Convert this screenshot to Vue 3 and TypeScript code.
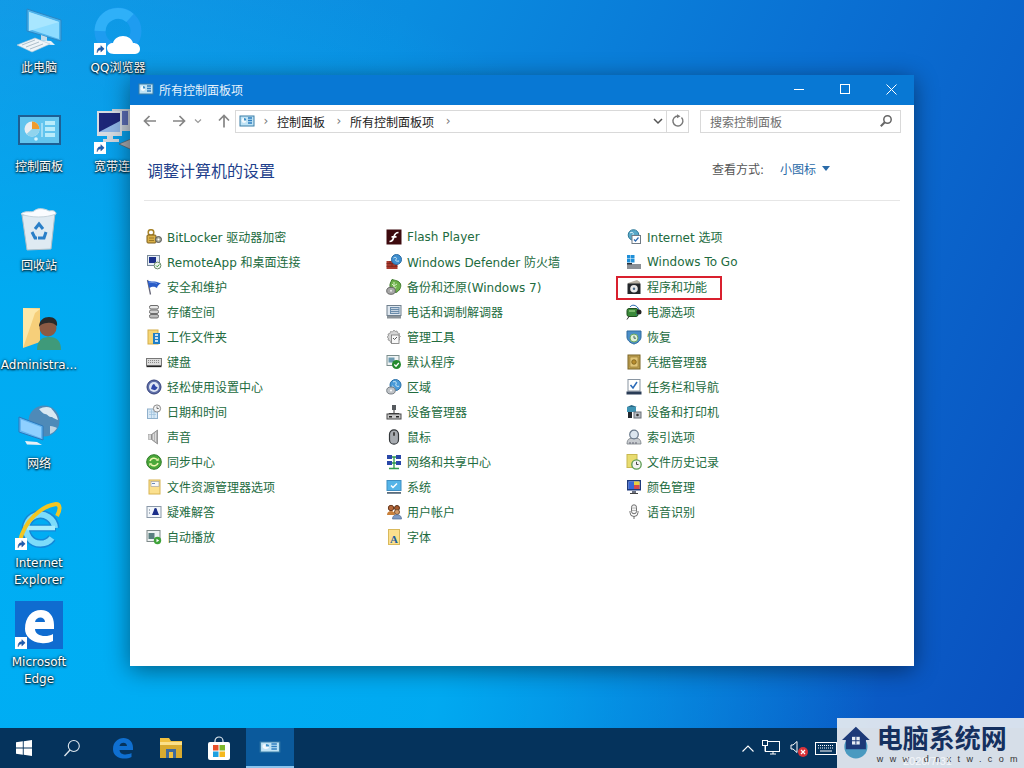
<script setup lang="ts">
interface CpItem {
  label: string
  icon: string
  marked?: boolean
}

const cpIcon = `<rect x="1" y="3" width="14" height="10" fill="#bfe3f5" stroke="#3a7fa8"/><circle cx="5" cy="7.500" r="2.400" fill="#f4fafd"/><path d="M5 7.500V5.100a2.400 2.400 0 0 1 2.400 2.400z" fill="#3a8fc8"/><path d="M9 5h4M9 7.500h4M9 10h4" stroke="#2f7fc0" stroke-width="1.300"/>`

const smallIcons: Record<string, string> = {
  bitlocker: `<circle cx="5" cy="3.500" r="2.800" fill="none" stroke="#a8842a" stroke-width="1.500"/><rect x="1" y="6" width="9" height="8" rx="1" fill="#d9b048" stroke="#7d5f1c"/><path d="M3 9h5M3 11.500h5" stroke="#8a6a1e" stroke-width=".8"/><circle cx="12.500" cy="10.500" r="3" fill="#a6a898" stroke="#555"/><circle cx="12.500" cy="10.500" r="1" fill="#fff"/>`,
  remote: `<rect x="1.500" y="1.500" width="12" height="10" fill="#e6eef5" stroke="#7a8a9a"/><rect x="3" y="3" width="7" height="6" fill="#1b2f8a"/><circle cx="11.500" cy="11.500" r="3.400" fill="#eef3ee" stroke="#6a8a6a"/><path d="M10 11.500l1.300 1.300 2-2.400" stroke="#3a9a3a" fill="none"/>`,
  flag: `<path d="M1.500 1l3 14.500" stroke="#667" stroke-width="1.300"/><path d="M1.500 1.500c4 2 6-.5 13.500 3-2.500 1-3.500 2.500-4 4.500C8 7 6 7.500 3.300 9z" fill="#2a5cc8"/><path d="M3 3c3 1 5 0 8 1.500" stroke="#6f95e0" fill="none"/>`,
  storage: `<rect x="3.500" y="1.500" width="9" height="3.500" rx="1.500" fill="#e8e8e8" stroke="#6e6e6e"/><rect x="3.500" y="6" width="9" height="3.500" rx="1.500" fill="#d4d4d4" stroke="#6e6e6e"/><rect x="3.500" y="10.500" width="9" height="3.500" rx="1.500" fill="#bdbdbd" stroke="#6e6e6e"/>`,
  workfolder: `<rect x="2" y="1" width="10" height="14" fill="#f6d676" stroke="#d4ad4a"/><rect x="7" y="4" width="7" height="11" fill="#1f7fc8"/><path d="M9 6h3M9 9h3M9 12h3" stroke="#fff" stroke-width="1.300"/>`,
  keyboard: `<rect x="0.500" y="4.500" width="15" height="7" fill="#dcdcdc" stroke="#777"/><path d="M2 6.500h12M2 8.500h12" stroke="#8a8a8a" stroke-dasharray="1 1"/><path d="M0.500 12.500h15" stroke="#222" stroke-width="1.300"/>`,
  ease: `<circle cx="8" cy="8" r="7" fill="#5f6fa8" stroke="#34407a"/><circle cx="8" cy="8" r="5" fill="#dfe6f5"/><path d="M5 10c1-4 2-5 3-5s1 3 3 3-2 4-3 3" fill="#2f46a8"/>`,
  datetime: `<rect x="1.500" y="5" width="10" height="9.500" fill="#d8e8f5" stroke="#8fb0cc"/><path d="M3 8h7M3 10.500h7M5.500 6v8M8 6v8" stroke="#9cc0dc" stroke-width=".7"/><circle cx="11" cy="4.500" r="3.600" fill="#f4f4f4" stroke="#8a8a8a"/><path d="M11 2.500v2h1.800" stroke="#555" fill="none" stroke-width=".8"/>`,
  sound: `<rect x="2.500" y="5.500" width="3" height="5" fill="#d4d4d4" stroke="#a0a0a0" stroke-width=".6"/><path d="M5.500 5.500l6-4.500v14l-6-4.500z" fill="#b4b4b4" stroke="#7d7d7d" stroke-width=".7"/><path d="M7.500 5v6M9.500 3.500v9" stroke="#e6e6e6" stroke-width=".8"/>`,
  sync: `<circle cx="8" cy="8" r="7.300" fill="#4aa83a" stroke="#2e7a26"/><path d="M4 7a4.200 4.200 0 0 1 7-1.500M12 9a4.200 4.200 0 0 1-7 1.500" stroke="#f0f7b0" stroke-width="1.600" fill="none"/><path d="M9.800 6.800h2.900V3.900zM6.200 9.200H3.300v2.900z" fill="#f0f7b0"/>`,
  folderopts: `<rect x="3" y="1" width="11" height="14" fill="#fbe08e" stroke="#d8b452"/><rect x="5" y="2.500" width="8" height="5" fill="#f8f8f8" stroke="#9a9a9a" stroke-width=".6"/><path d="M6 4.500h3" stroke="#6a8ab8"/>`,
  trouble: `<rect x="1" y="2.500" width="14" height="11" fill="#f2f6fa" stroke="#8a98a8"/><path d="M6 11l2-5h3l2 5z" fill="#1b2f8a"/><circle cx="9.500" cy="5.500" r="1.500" fill="#1b2f8a"/><path d="M3 6h2M3 9h2" stroke="#6a7a8a" stroke-dasharray="1 1"/>`,
  autoplay: `<rect x="1" y="1.500" width="13" height="11" fill="#eef2f2" stroke="#7e8a8a"/><rect x="2.500" y="4" width="6" height="6" fill="#5a7f80"/><circle cx="11.500" cy="11.500" r="3.700" fill="#3fa33a"/><path d="M10.500 9.800l2.700 1.700-2.700 1.700z" fill="#fff"/>`,
  flash: `<rect x="0.500" y="0.500" width="15" height="15" fill="#3d0a0e"/><path d="M3.500 12.500c3.500 0 3.800-2.600 4.500-5s1.500-4 4.500-4M5.500 7.800h5" stroke="#fff" stroke-width="1.700" fill="none"/>`,
  firewall: `<path d="M0.500 7h11v8h-11z" fill="#a83a2e"/><path d="M0.500 9.600h11M0.500 12.300h11M4 7v2.600M8 7v2.600M6 9.600v2.700M10 9.600v2.700" stroke="#6e2018" stroke-width=".7"/><circle cx="10.500" cy="5.500" r="5" fill="#3f8fd0" stroke="#2a6aa0"/><path d="M7.500 4c2-1.500 4 0 2.500 1.500s1.500 2 3 1.500" stroke="#cfeaf8" fill="none"/>`,
  backup: `<path d="M6 0.500c3 1 7 1 8.500 4.500 1 3-1 7-4.500 8.500-3-1-5.500-3-6-6C3.500 5 5 3 6 .5z" fill="#6db04a" stroke="#3f7a2c"/><path d="M8 3v8M6 5l2 2 3-2M6.500 9L8 10l2.500-2" stroke="#d7efc4" fill="none"/><ellipse cx="5" cy="11.800" rx="4.300" ry="3.500" fill="#a8a8a8" stroke="#666"/><circle cx="5" cy="11.800" r="1" fill="#eee"/>`,
  phone: `<rect x="1" y="1.500" width="14" height="10" fill="#dfe7ef" stroke="#70808e"/><rect x="4" y="3" width="9.500" height="7" fill="#6a8cab"/><path d="M5 4.500h7.500M5 6.500h7.500M5 8.500h7.500" stroke="#dfe7ef" stroke-width=".8"/><rect x="1" y="12" width="14" height="2.500" fill="#8a9298"/>`,
  admin: `<path d="M8 1l1 1.500 2-.5.500 2 2 .5-.500 2 1.500 1-1.500 1.500.500 2-2 .5-.500 2-2-.5L8 14.500 6.500 13l-2 .5-.5-2-2-.5.500-2L1 8l1.500-1L2 5l2-.5.500-2 2 .5z" fill="#d6d6d6" stroke="#8e8e8e" stroke-width=".8"/><rect x="5.500" y="6" width="7.500" height="8.500" fill="#f7f7f7" stroke="#777" stroke-width=".8"/><path d="M7 9l1.500 1.500L11 8" stroke="#555" fill="none"/>`,
  defaults: `<rect x="1" y="1.500" width="12" height="10" fill="#f0f4f4" stroke="#7b8d8d"/><rect x="2.500" y="3.500" width="6" height="5" fill="#6d9ab0"/><circle cx="10.500" cy="10.500" r="4.500" fill="#248a2e"/><path d="M8.300 10.500l1.700 1.700 2.800-3.200" stroke="#fff" stroke-width="1.300" fill="none"/>`,
  region: `<circle cx="9.500" cy="6" r="5.500" fill="#4a9ad8" stroke="#2a70a8"/><path d="M7 3c2-1 4 0 3 2s2 3 3 2M6 7c1 0 2 1 2 3" stroke="#d8f0fb" fill="none"/><ellipse cx="5" cy="11.500" rx="4.300" ry="3.500" fill="#c0c4c8" stroke="#7a8086"/><circle cx="5" cy="11.500" r="1" fill="#fff"/>`,
  devmgr: `<rect x="6" y="1" width="4" height="5" fill="#55595e"/><path d="M8 6v3M3 13V9.500h10V13" stroke="#333" fill="none"/><rect x="1" y="10" width="14" height="5" fill="#c8c8c8" stroke="#4a4a4a"/><rect x="3" y="12" width="3" height="1.500" fill="#222"/><rect x="10" y="12" width="3" height="1.500" fill="#222"/>`,
  mouse: `<rect x="3.500" y="0.800" width="9" height="14.400" rx="4.500" fill="#a7abb0" stroke="#33373a" stroke-width="1.200"/><rect x="7" y="3" width="2" height="4" rx="1" fill="#444"/>`,
  network: `<rect x="1" y="1" width="5" height="4" fill="#2a48a8"/><rect x="10" y="1" width="5" height="4" fill="#2a48a8"/><rect x="1" y="7" width="5" height="4" fill="#2a48a8"/><rect x="10" y="7" width="5" height="4" fill="#2a48a8"/><path d="M6 3h4M6 9h4M8 3v11M3 14.500h10" stroke="#2f9a4a" stroke-width="1.300"/>`,
  system: `<rect x="1" y="1.500" width="14" height="10" fill="#55b4e8" stroke="#3f8fc4"/><path d="M5 6.500l2 2 4-4" stroke="#fff" stroke-width="1.500" fill="none"/><rect x="1" y="13" width="14" height="1.800" fill="#5a6c7c"/>`,
  users: `<circle cx="5" cy="4" r="2.700" fill="#b4673a" stroke="#6a3a1e"/><path d="M1 11c0-3 2-4 4-4s4 1 4 4z" fill="#c9803a"/><circle cx="11" cy="4" r="2.500" fill="#a85a2e" stroke="#5a3018"/><circle cx="11" cy="8" r="2.500" fill="#d09a6a" stroke="#7a5230"/><path d="M6.500 15c0-3 2-4.300 4.500-4.300s4.500 1.300 4.500 4.300z" fill="#7d9ac4" stroke="#4f6a94" stroke-width=".7"/>`,
  font: `<rect x="2.500" y="0.500" width="11" height="15" fill="#fbe08e" stroke="#d9b95c"/><text x="8" y="14" text-anchor="middle" font-family="Liberation Serif" font-size="11" font-weight="700" fill="#1d5fa0">A</text>`,
  internet: `<circle cx="7.500" cy="6" r="5.300" fill="#58a8c8" stroke="#2e7a98"/><path d="M4 4c2-1.500 4 0 3 1.500s1 2 3 1.500" stroke="#dff3f8" fill="none"/><rect x="6" y="6.500" width="8.500" height="8" fill="#fff" stroke="#707a84"/><path d="M8 10.500l1.500 1.500 3-3.500" stroke="#2c6ab0" fill="none" stroke-width="1.200"/>`,
  wtg: `<rect x="1" y="1" width="3.500" height="3.500" fill="#1f8fd8"/><rect x="5" y="1" width="3.500" height="3.500" fill="#1f8fd8"/><rect x="1" y="5" width="3.500" height="3.500" fill="#1f8fd8"/><rect x="5" y="5" width="3.500" height="3.500" fill="#1f8fd8"/><rect x="1" y="10" width="14" height="5" fill="#8c9096"/><rect x="1" y="9" width="5" height="1.500" fill="#2a2f36"/>`,
  programs: `<path d="M2 4l9-3 3 2v2H2z" fill="#b7b0a4"/><rect x="1.500" y="4.500" width="13" height="10.500" fill="#23272b"/><circle cx="8" cy="9.700" r="3.800" fill="#e8e8e8"/><circle cx="8" cy="9.700" r="1.200" fill="#4a6a8a"/>`,
  power: `<rect x="1" y="4.500" width="11" height="8" rx="2" fill="#3a8a3a" stroke="#1f4f1f"/><path d="M3 7h6" stroke="#b8e8a0"/><path d="M4 3c2-3 6-2 8 1s0 6-2 7" stroke="#2a6ab0" fill="none"/><circle cx="13" cy="8" r="2.500" fill="#222"/><path d="M3 12.500l-2 3" stroke="#333"/>`,
  recovery: `<path d="M1 2h14v6c0 3-3 6-7 7-4-1-7-4-7-7z" fill="#4a8ec8" stroke="#2e6a9e"/><circle cx="8" cy="9" r="4" fill="#dff0d8" stroke="#6aa860"/><path d="M8 6.800v2.400h2" stroke="#466" fill="none"/>`,
  credential: `<rect x="2" y="1" width="12" height="14" fill="#c0a252" stroke="#7b6426"/><rect x="4" y="3" width="8" height="10" fill="#e2c678" stroke="#8f7530" stroke-width=".6"/><circle cx="8" cy="8" r="2.300" fill="#b88d2e" stroke="#6e5516" stroke-width=".7"/>`,
  taskbar: `<rect x="2" y="0.500" width="12" height="11.500" fill="#fff" stroke="#8a96a2"/><path d="M4.500 6l2.500 3 4-6" stroke="#2a6ab8" stroke-width="1.500" fill="none"/><rect x="0.500" y="12.500" width="15" height="3" fill="#2a3c56"/>`,
  devices: `<rect x="1" y="3" width="9" height="5" fill="#3e94b4"/><path d="M1 3l4.500-2L11 3z" fill="#2a6a88"/><rect x="2" y="8" width="4" height="6" fill="#22282e"/><rect x="8" y="8" width="7" height="6" fill="#b8bdc4" stroke="#6a7078"/><circle cx="11.500" cy="11" r="1.300" fill="#333"/>`,
  index: `<path d="M1 15c0-3 1-5 3-5.500h8c2 .5 3 2.500 3 5.500z" fill="#c8ccd0" stroke="#7a8086" stroke-width=".8"/><circle cx="8" cy="5.500" r="4.300" fill="#dce6ef" stroke="#6a7a8c" stroke-width="1.200"/><path d="M4 15v-2M7 15v-2M10 15v-2" stroke="#667"/>`,
  filehistory: `<rect x="1" y="0.500" width="10" height="13" fill="#e8dc70" stroke="#c8b850"/><circle cx="10.500" cy="10.500" r="4.700" fill="#f2f2f2" stroke="#5a9a50" stroke-width="1.300"/><path d="M10.500 7.800v2.700h2" stroke="#444" fill="none"/>`,
  color: `<rect x="1" y="1" width="14" height="10.500" fill="#1f3a7c"/><rect x="2.500" y="2.500" width="11" height="7.500" fill="#e8e8f8"/><path d="M2.500 2.500h5.500V10H2.500z" fill="#3a68d8"/><path d="M8 2.500h5.500V6H8z" fill="#e8d040"/><path d="M8 6h5.500v4H8z" fill="#d84a4a"/><path d="M6 12h4v2H6z" fill="#6a7080"/><path d="M4 14.500h8" stroke="#444"/>`,
  speech: `<rect x="5.500" y="0.800" width="5" height="9" rx="2.500" fill="#f5f5f5" stroke="#6e6e6e"/><path d="M5.500 4h5M5.500 6.500h5" stroke="#9a9a9a" stroke-width=".7"/><path d="M4 7v1.500a4 4 0 0 0 8 0V7M8 12.500v2.500" stroke="#6e6e6e" fill="none"/>`,
}

const columns: CpItem[][] = [
  [
    { label: 'BitLocker 驱动器加密', icon: 'bitlocker' },
    { label: 'RemoteApp 和桌面连接', icon: 'remote' },
    { label: '安全和维护', icon: 'flag' },
    { label: '存储空间', icon: 'storage' },
    { label: '工作文件夹', icon: 'workfolder' },
    { label: '键盘', icon: 'keyboard' },
    { label: '轻松使用设置中心', icon: 'ease' },
    { label: '日期和时间', icon: 'datetime' },
    { label: '声音', icon: 'sound' },
    { label: '同步中心', icon: 'sync' },
    { label: '文件资源管理器选项', icon: 'folderopts' },
    { label: '疑难解答', icon: 'trouble' },
    { label: '自动播放', icon: 'autoplay' },
  ],
  [
    { label: 'Flash Player', icon: 'flash' },
    { label: 'Windows Defender 防火墙', icon: 'firewall' },
    { label: '备份和还原(Windows 7)', icon: 'backup' },
    { label: '电话和调制解调器', icon: 'phone' },
    { label: '管理工具', icon: 'admin' },
    { label: '默认程序', icon: 'defaults' },
    { label: '区域', icon: 'region' },
    { label: '设备管理器', icon: 'devmgr' },
    { label: '鼠标', icon: 'mouse' },
    { label: '网络和共享中心', icon: 'network' },
    { label: '系统', icon: 'system' },
    { label: '用户帐户', icon: 'users' },
    { label: '字体', icon: 'font' },
  ],
  [
    { label: 'Internet 选项', icon: 'internet' },
    { label: 'Windows To Go', icon: 'wtg' },
    { label: '程序和功能', icon: 'programs', marked: true },
    { label: '电源选项', icon: 'power' },
    { label: '恢复', icon: 'recovery' },
    { label: '凭据管理器', icon: 'credential' },
    { label: '任务栏和导航', icon: 'taskbar' },
    { label: '设备和打印机', icon: 'devices' },
    { label: '索引选项', icon: 'index' },
    { label: '文件历史记录', icon: 'filehistory' },
    { label: '颜色管理', icon: 'color' },
    { label: '语音识别', icon: 'speech' },
  ],
]

interface DesktopIcon {
  lines: string[]
  art: string
  shortcut?: boolean
}

const pcArt = `<path d="M12 2l34 11v21L12 24z" fill="#4fb4ec" stroke="#2a86c4"/><path d="M14 5l30 10v17L14 22z" fill="#8edcff"/><path d="M14 5l30 10-30 9z" fill="#a8e6ff"/><path d="M26 28l6 2v4l-6-1z" fill="#c4dcea"/><path d="M22 33l14 1 4 4-14-.5z" fill="#e8f2f8"/><path d="M2 38l18-7 15 6-18 8z" fill="#eef4f8" stroke="#b4c8d6" stroke-width=".6"/><path d="M7 38l13-5M11 40l13-5M15 42l13-5" stroke="#aebfcb"/>`
const qqArt = `<circle cx="24" cy="24" r="18" fill="none" stroke="#1e9cf0" stroke-width="11"/><path d="M6 24a18 18 0 0 1 30-13" fill="none" stroke="#2fb0f8" stroke-width="11"/><path d="M20 47c-5 0-7-3-7-6s3-5 6-5c1-4 5-7 10-7s9 3 10 7c4 0 7 2 7 6s-3 5-6 5z" fill="#fff"/>`
const panelArt = `<rect x="3" y="9" width="43" height="30" fill="#1d5f94"/><rect x="5" y="11" width="39" height="26" fill="#62c4ee"/><circle cx="17" cy="23" r="7.500" fill="#e9eef2"/><path d="M17 23v-7.500a7.500 7.500 0 0 1 7.500 7.500z" fill="#ef9c2e"/><path d="M17 23h7.500a7.500 7.500 0 0 1-13 5z" fill="#8fd4ee"/><rect x="30" y="15" width="10" height="4" fill="#b9ecfb"/><rect x="30" y="21" width="10" height="4" fill="#b9ecfb"/><rect x="30" y="27" width="10" height="4" fill="#b9ecfb"/><path d="M27 17v14" stroke="#d8f5ff"/><circle cx="21" cy="33" r="1.800" fill="#d8f5ff"/>`
const broadbandArt = `<rect x="18" y="3" width="18" height="22" fill="#c4ccd6"/><rect x="20" y="5" width="14" height="14" fill="#5b6cb4"/><rect x="3" y="5" width="25" height="25" fill="#d6dbe2"/><rect x="5" y="7" width="21" height="19" fill="#1d2678"/><path d="M5 26l21-11v11z" fill="#8fb4e4"/><path d="M13 30h6v3h6v3H9v-3h4z" fill="#cfd5dc"/><path d="M25 38l12-5 10 5-11 5z" fill="#a6aab0" stroke="#555" stroke-width=".6"/>`
const binArt = `<path d="M7 10l33-2-4 36-24 1z" fill="#dfeaf2" stroke="#aebfca"/><path d="M6 9c4-4 10-1 13-3 4-4 12-2 15 0 4-1 7 0 7 3-10 4-25 4-35 0z" fill="#fafcff" stroke="#c5d3dc"/><path d="M20 24l4-5 4 5M31 27l-2 6h-6M17 27l3 6h2" stroke="#2a7fc8" stroke-width="3" fill="none"/>`
const adminArt = `<path d="M8 4h17v34L8 44z" fill="#f6cf7a"/><path d="M8 4l17 1-5 4L8 44z" fill="#fde7a8"/><path d="M22 46c0-9 4-13 12-13s12 4 12 13z" fill="#3f9a7a"/><circle cx="33" cy="24" r="8.500" fill="#8c5a44"/><path d="M24 23c0-7 5-10 10-10s9 3 8 9c-3-3-7-4-10-3-3 0-6 1-8 4z" fill="#2a2a2a"/>`
const netArt = `<circle cx="29" cy="18" r="15.500" fill="#4e8ab8"/><path d="M24 6c4-2 8-3 12-1 2 3 6 6 7 12-4-1-5-3-7-3-3 0-3-3-6-3-2 0-4-3-6-5z" fill="#d8e8f2"/><path d="M35 23c3 0 5 1 7 2-2 3-4 5-7 6z" fill="#c0d4e2"/><path d="M4 14l24 9v14L4 29z" fill="#63b4f0" stroke="#2a78bc"/><path d="M6 16.500l20 7.500v11L6 27.500z" fill="#8fd0ff"/><path d="M10 38l12 1 5 3-15-.5z" fill="#e8f0f5"/>`
const ieArt = `<path d="M40 26a14.500 14.500 0 1 0-3 10" fill="none" stroke="#1488d8" stroke-width="9"/><path d="M12 26h29" stroke="#1488d8" stroke-width="7"/><path d="M40 26a14.500 14.500 0 1 0-3 10" fill="none" stroke="#7cdcfa" stroke-width="6"/><path d="M12 26h28" stroke="#a6ecfc" stroke-width="4.500"/><path d="M5 39C9 20 26 4 41 2c4 0 5 5 1 12" fill="none" stroke="#f2c622" stroke-width="4"/>`
const edgeArt = `<rect x="0" y="0" width="48" height="48" fill="#0f6cd0"/><path d="M10 28C10 16 17 9 26 9c8 0 13 6 13 15v4H20c0 7 11 9 18 5v7c-4 2-8 2.500-12 2-10-1-16-7-16-14zM20 21h10c0-6-9-6-10 0z" fill="#fff"/>`

const desktopCols: DesktopIcon[][] = [
  [
    { lines: ['此电脑'], art: pcArt },
    { lines: ['控制面板'], art: panelArt },
    { lines: ['回收站'], art: binArt },
    { lines: ['Administra...'], art: adminArt },
    { lines: ['网络'], art: netArt },
    { lines: ['Internet', 'Explorer'], art: ieArt, shortcut: true },
    { lines: ['Microsoft', 'Edge'], art: edgeArt, shortcut: true },
  ],
  [
    { lines: ['QQ浏览器'], art: qqArt, shortcut: true },
    { lines: ['宽带连接'], art: broadbandArt, shortcut: true },
  ],
]
</script>

<template>
  <div class="desktop">
    <div class="icon-area">
      <div v-for="(col, c) in desktopCols" :key="c" class="icon-col">
        <div v-for="ic in col" :key="ic.lines[0]" class="d-icon">
          <div class="d-art">
            <svg viewBox="0 0 48 48" width="48" height="48" v-html="ic.art"></svg>
            <span v-if="ic.shortcut" class="shortcut">
              <svg viewBox="0 0 12 12" width="10" height="10"><path d="M2.500 10.500C2.500 6 4 4.500 7 4.500V2l4 3.800L7 9.500V7C5 7 3.800 8 2.500 10.500z" fill="#1f5fb4" stroke="#123f80" stroke-width=".5"/></svg>
            </span>
          </div>
          <div class="d-label">
            <div v-for="line in ic.lines" :key="line">{{ line }}</div>
          </div>
        </div>
      </div>
    </div>

    <div class="window">
      <div class="titlebar">
        <svg class="title-icon" viewBox="0 0 16 16" width="16" height="16" v-html="cpIcon"></svg>
        <span class="title-text">所有控制面板项</span>
        <div class="win-btns">
          <button class="win-btn"><svg width="10" height="10" viewBox="0 0 10 10"><path d="M0 5.500h10" stroke="#fff"/></svg></button>
          <button class="win-btn"><svg width="10" height="10" viewBox="0 0 10 10"><rect x=".5" y=".5" width="9" height="9" fill="none" stroke="#fff"/></svg></button>
          <button class="win-btn"><svg width="11" height="11" viewBox="0 0 11 11"><path d="M.5.500l10 10M10.500.500l-10 10" stroke="#fff"/></svg></button>
        </div>
      </div>

      <div class="navbar">
        <svg class="nav-arrow" width="16" height="16" viewBox="0 0 16 16"><path d="M14 8H2.500M7.500 3l-5 5 5 5" stroke="#858585" stroke-width="1.700" fill="none"/></svg>
        <svg class="nav-arrow fwd" width="16" height="16" viewBox="0 0 16 16"><path d="M2 8h11.500M8.500 3l5 5-5 5" stroke="#858585" stroke-width="1.700" fill="none"/></svg>
        <svg class="nav-drop" width="8" height="8" viewBox="0 0 8 8"><path d="M1 2.500l3 3 3-3" stroke="#9a9a9a" fill="none" stroke-width="1.200"/></svg>
        <svg class="nav-arrow up" width="16" height="16" viewBox="0 0 16 16"><path d="M8 14.500V2.500M3 7.500l5-5 5 5" stroke="#858585" stroke-width="1.700" fill="none"/></svg>
        <div class="address">
          <svg class="addr-icon" viewBox="0 0 16 16" width="16" height="16" v-html="cpIcon"></svg>
          <span class="crumb-sep">›</span>
          <span class="crumb">控制面板</span>
          <span class="crumb-sep">›</span>
          <span class="crumb">所有控制面板项</span>
          <span class="crumb-sep">›</span>
          <svg class="addr-drop" width="12" height="12" viewBox="0 0 12 12"><path d="M2 4l4 4 4-4" stroke="#555" stroke-width="1.500" fill="none"/></svg>
          <span class="refresh">
            <svg width="14" height="14" viewBox="0 0 14 14"><path d="M10.500 3.500a5 5 0 1 1-3.500-1.500" stroke="#777" stroke-width="1.400" fill="none"/><path d="M6 .200l3.500 2L6 4.300z" fill="#777"/></svg>
          </span>
        </div>
        <div class="search">
          <span>搜索控制面板</span>
          <svg width="14" height="14" viewBox="0 0 14 14"><circle cx="8.500" cy="5.500" r="3.700" fill="none" stroke="#666" stroke-width="1.500"/><path d="M5.800 8.200l-4 4" stroke="#666" stroke-width="2"/></svg>
        </div>
      </div>

      <div class="content">
        <div class="heading-row">
          <h1>调整计算机的设置</h1>
          <div class="view-by">
            <span class="view-label">查看方式:</span>
            <span class="view-value">小图标</span>
            <span class="view-caret"></span>
          </div>
        </div>
        <div class="divider"></div>
        <div class="cp-grid">
          <div v-for="(col, c) in columns" :key="c" class="cp-col">
            <div v-for="item in col" :key="item.label" class="cp-item" :class="{ marked: item.marked }">
              <svg viewBox="0 0 16 16" width="16" height="16" v-html="smallIcons[item.icon]"></svg>
              <span>{{ item.label }}</span>
            </div>
          </div>
        </div>
      </div>
    </div>

    <div class="taskbar">
      <div class="tb-btn">
        <svg width="16" height="16" viewBox="0 0 16 16"><path d="M0 2.300l6.800-1v6.200H0zM7.700 1.200L16 0v7.500H7.700zM0 8.400h6.800v6.300L0 13.700zM7.700 8.400H16V16l-8.300-1.200z" fill="#fff"/></svg>
      </div>
      <div class="tb-btn">
        <svg width="18" height="18" viewBox="0 0 18 18"><circle cx="10.800" cy="7" r="5.500" fill="none" stroke="#dfe8ef" stroke-width="1.100"/><path d="M7 11l-5.500 6" stroke="#dfe8ef" stroke-width="1.300"/></svg>
      </div>
      <div class="tb-btn tb-edge">
        <svg width="22" height="22" viewBox="0 0 22 22"><path d="M1 12C1 5 6 1 11.500 1 17 1 21 5 21 10.500V13H7.500c.3 5 7 5.500 12 3v4c-3 1.500-7 2-10.500 1.200C4 20 1 17 1 12zM7.500 9H15c0-4.500-7-4.500-7.500 0z" fill="#0f6fd0"/></svg>
      </div>
      <div class="tb-btn">
        <svg width="24" height="22" viewBox="0 0 24 22"><path d="M1 1h9l2 3h11v17H1z" fill="#f0c040"/><rect x="1" y="6" width="22" height="15" fill="#d9ab30"/><rect x="1" y="5" width="22" height="3" fill="#fbe08a"/><rect x="7" y="12" width="10" height="9" fill="#3f6a9c"/><rect x="10" y="15" width="4" height="6" fill="#f0c040"/></svg>
      </div>
      <div class="tb-btn">
        <svg width="24" height="24" viewBox="0 0 24 24"><path d="M8 6V5a4 4 0 0 1 8 0v1" fill="none" stroke="#dfe8ef" stroke-width="1.200"/><rect x="1" y="6" width="22" height="18" rx="2" fill="#fff"/><rect x="6" y="9" width="5.500" height="5.500" fill="#e8502a"/><rect x="12.500" y="9" width="5.500" height="5.500" fill="#7fb82a"/><rect x="6" y="15.500" width="5.500" height="5.500" fill="#1ea0e0"/><rect x="12.500" y="15.500" width="5.500" height="5.500" fill="#f5b81e"/></svg>
      </div>
      <div class="tb-btn active">
        <svg viewBox="0 0 16 16" width="22" height="16" preserveAspectRatio="none" v-html="cpIcon"></svg>
      </div>
      <div class="tray">
        <svg width="12" height="7" viewBox="0 0 12 7"><path d="M.500 6.500L6 1l5.500 5.500" stroke="#fff" fill="none" stroke-width="1.100"/></svg>
        <svg width="18" height="16" viewBox="0 0 18 16"><rect x="3.500" y="1.500" width="14" height="10" fill="none" stroke="#fff"/><rect x=".5" y=".5" width="5" height="5" fill="#05335c" stroke="#fff"/><path d="M3 5.500v6M8 14h6M11 11.500V14" stroke="#fff"/></svg>
        <span class="tray-sound">
          <svg width="12" height="14" viewBox="0 0 12 14"><path d="M1 5h2l4-3.500v11L3 9H1z" fill="none" stroke="#fff"/></svg>
          <svg class="mute" width="10" height="10" viewBox="0 0 10 10"><circle cx="5" cy="5" r="5" fill="#d8333a"/><path d="M3 3l4 4M7 3L3 7" stroke="#fff" stroke-width="1.200"/></svg>
        </span>
        <svg class="tray-kbd" width="22" height="13" viewBox="0 0 22 13"><rect x=".5" y=".5" width="21" height="12" fill="none" stroke="#fff"/><path d="M3 3.500h16M3 6h16" stroke="#fff" stroke-dasharray="1 1"/><path d="M5 9h12" stroke="#fff"/></svg>
      </div>
    </div>

    <div class="watermark">
      <svg width="36" height="42" viewBox="0 0 36 42"><circle cx="18" cy="26" r="15" fill="#4a9ac0"/><path d="M0 17L18 0l18 17h-5v12H5V17z" fill="#1d3a78"/><path d="M13 13h10v10H13z" fill="#e8eef4"/><path d="M18 13v10M13 18h10" stroke="#1d3a78" stroke-width="1.300"/></svg>
      <div class="wm-text">
        <div class="wm-title">电脑系统网</div>
        <div class="wm-url">www.dnxtw.com</div>
      </div>
      <span class="wm-date">2020/7/31</span>
    </div>
  </div>
</template>

<style>
html,
body {
  margin: 0;
  padding: 0;
  overflow: hidden;
}
</style>

<style scoped>
.desktop {
  position: relative;
  width: 1024px;
  height: 768px;
  overflow: hidden;
  font-family: "DejaVu Sans", "Noto Sans CJK SC", sans-serif;
  font-size: 12px;
  background:
    radial-gradient(ellipse 880px 720px at 0% 85%, #00aef4 0%, rgba(0, 172, 242, 0.95) 50%, rgba(0, 160, 236, 0) 100%),
    linear-gradient(115deg, #1597e4 0%, #0a8de0 30%, #0a6fd2 62%, #0a4fbe 100%);
}

/* desktop icons */
.icon-area {
  position: absolute;
  left: 0;
  top: 7px;
  display: flex;
}

.icon-col {
  width: 79px;
  display: flex;
  flex-direction: column;
}

.d-icon {
  height: 99px;
  width: 78px;
  display: flex;
  flex-direction: column;
  align-items: center;
  color: #fff;
}

.d-art {
  position: relative;
  width: 48px;
  height: 48px;
  margin-bottom: 5px;
}

.d-art svg {
  display: block;
}

.shortcut {
  position: absolute;
  left: 0;
  bottom: 0;
  width: 12px;
  height: 12px;
  background: #fff;
  display: flex;
  align-items: center;
  justify-content: center;
}

.d-label {
  text-align: center;
  line-height: 17px;
  white-space: nowrap;
  text-shadow: 0 1px 2px #000, 0 0 3px rgba(0, 0, 0, 0.8);
}

/* window */
.window {
  position: absolute;
  left: 130px;
  top: 75px;
  width: 784px;
  height: 591px;
  background: #fff;
  display: flex;
  flex-direction: column;
  box-shadow: 0 4px 22px rgba(0, 0, 0, 0.45);
}

.titlebar {
  height: 30px;
  box-sizing: border-box;
  padding: 0 0 2px 8px;
  background: #0878d4;
  display: flex;
  align-items: center;
  color: #fff;
}

.title-icon {
  margin-right: 5px;
}

.title-text {
  color: #e6f2fb;
}

.win-btns {
  margin-left: auto;
  display: flex;
}

.win-btn {
  width: 46px;
  height: 28px;
  padding: 0;
  border: 0;
  background: none;
  display: flex;
  align-items: center;
  justify-content: center;
}

.navbar {
  height: 32px;
  display: flex;
  align-items: center;
  padding-left: 12px;
  flex-shrink: 0;
}

.nav-arrow.fwd {
  margin-left: 13px;
}

.nav-drop {
  margin-left: 7px;
}

.nav-arrow.up {
  margin-left: 14px;
}

.address {
  margin-left: 3px;
  width: 454px;
  height: 23px;
  box-sizing: border-box;
  border: 1px solid #d9d9d9;
  display: flex;
  align-items: center;
  padding-left: 3px;
  color: #222;
}

.crumb {
  margin-right: 3px;
}

.crumb-sep {
  width: 22px;
  text-align: center;
  color: #777;
}

.addr-drop {
  margin-left: auto;
  margin-right: 2px;
}

.refresh {
  width: 21px;
  height: 21px;
  border-left: 1px solid #d9d9d9;
  display: flex;
  align-items: center;
  justify-content: center;
}

.search {
  margin-left: 11px;
  width: 201px;
  height: 23px;
  box-sizing: border-box;
  border: 1px solid #d9d9d9;
  display: flex;
  align-items: center;
  justify-content: space-between;
  padding: 0 7px 0 9px;
  color: #6d6d6d;
}

.content {
  flex: 1;
  padding: 0 14px;
}

.heading-row {
  height: 63px;
  display: flex;
  align-items: center;
  justify-content: space-between;
  padding: 3px 0 0 4px;
  box-sizing: border-box;
}

h1 {
  margin: 0 0 0 -1px;
  font-size: 16px;
  font-weight: 400;
  color: #1e3f8c;
}

.view-by {
  display: flex;
  align-items: center;
  width: 189px;
  margin-right: -1px;
  margin-top: -4px;
}

.view-label {
  color: #555;
  width: 68px;
}

.view-value {
  color: #2a6aa8;
}

.view-caret {
  margin-left: 6px;
  border: 4px solid transparent;
  border-top: 5px solid #2a6aa8;
  border-bottom: 0;
}

.divider {
  height: 1px;
  background: #e6e6e6;
  width: 756px;
}

.cp-grid {
  display: flex;
  padding: 23px 0 0 2px;
}

.cp-col {
  width: 240px;
}

.cp-item {
  position: relative;
  height: 25px;
  display: flex;
  align-items: center;
  gap: 5px;
  color: #226b3e;
  white-space: nowrap;
}

.cp-item svg {
  flex-shrink: 0;
}

.cp-item.marked::after {
  content: "";
  position: absolute;
  left: -10px;
  top: 2px;
  width: 102px;
  height: 20px;
  border: 2px solid #d9202e;
}

/* taskbar */
.taskbar {
  position: absolute;
  left: 0;
  right: 0;
  bottom: 0;
  height: 40px;
  background: #05335c;
  display: flex;
  align-items: center;
}

.tb-btn {
  width: 48px;
  height: 40px;
  flex-shrink: 0;
  display: flex;
  align-items: center;
  justify-content: center;
  box-sizing: border-box;
}

.tb-btn.tb-edge {
  margin-left: 3px;
}

.tb-btn.active {
  margin-left: 3px;
  background: #0b5a9c;
  border-bottom: 2px solid #8cc4ee;
}

.tray {
  margin-left: 448px;
  display: flex;
  align-items: center;
  gap: 8px;
}

.tray-sound {
  position: relative;
  width: 18px;
  height: 16px;
  margin-left: 2px;
}

.mute {
  position: absolute;
  right: 0;
  bottom: -1px;
}

.tray-kbd {
  margin-left: -1px;
}

.watermark {
  position: absolute;
  right: 0;
  bottom: 0;
  width: 187px;
  height: 50px;
  background: rgba(226, 232, 239, 0.95);
  display: flex;
  align-items: center;
  padding-left: 5px;
  box-sizing: border-box;
}

.wm-text {
  margin-left: 7px;
}

.wm-title {
  font-family: "Noto Sans CJK SC", serif;
  font-size: 26px;
  font-weight: 700;
  line-height: 32px;
  color: #15305f;
  white-space: nowrap;
}

.wm-url {
  font-family: "Liberation Sans", sans-serif;
  font-size: 9px;
  letter-spacing: 6.4px;
  line-height: 12px;
  color: #333;
  white-space: nowrap;
}

.wm-date {
  position: absolute;
  left: 66px;
  bottom: 1px;
  font-family: "Liberation Sans", sans-serif;
  font-size: 11px;
  color: rgba(255, 255, 255, 0.75);
}
</style>
